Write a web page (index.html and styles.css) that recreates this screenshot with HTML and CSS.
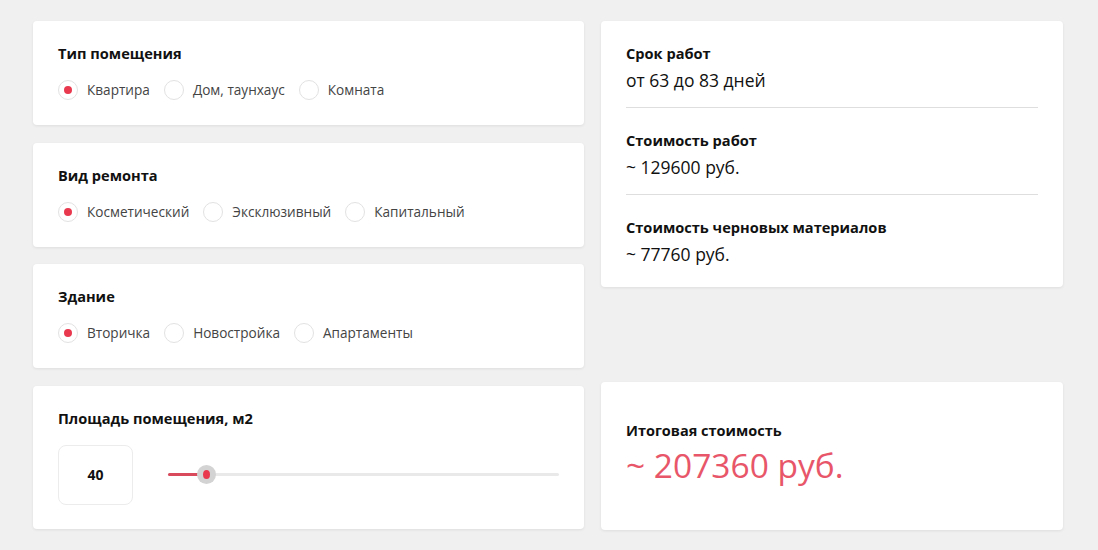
FILE: index.html
```html
<!DOCTYPE html>
<html lang="ru">
<head>
<meta charset="utf-8">
<link rel="stylesheet" href="styles.css">
</head>
<body>
<div class="page">
  <div class="col left">
    <section class="card">
      <h3 class="title">Тип помещения</h3>
      <div class="radios">
        <label class="radio on"><span class="dot"></span>Квартира</label>
        <label class="radio"><span class="dot"></span>Дом, таунхаус</label>
        <label class="radio"><span class="dot"></span>Комната</label>
      </div>
    </section>
    <section class="card">
      <h3 class="title">Вид ремонта</h3>
      <div class="radios">
        <label class="radio on"><span class="dot"></span>Косметический</label>
        <label class="radio"><span class="dot"></span>Эксклюзивный</label>
        <label class="radio"><span class="dot"></span>Капитальный</label>
      </div>
    </section>
    <section class="card">
      <h3 class="title">Здание</h3>
      <div class="radios">
        <label class="radio on"><span class="dot"></span>Вторичка</label>
        <label class="radio"><span class="dot"></span>Новостройка</label>
        <label class="radio"><span class="dot"></span>Апартаменты</label>
      </div>
    </section>
    <section class="card area">
      <h3 class="title">Площадь помещения, м2</h3>
      <div class="area-row">
        <div class="num">40</div>
        <div class="slider">
          <div class="fill" style="width:38px"></div>
          <div class="thumb" style="left:38px"></div>
        </div>
      </div>
    </section>
  </div>
  <div class="col right">
    <section class="card info">
      <div class="item">
        <h3 class="title">Срок работ</h3>
        <div class="value">от 63 до 83 дней</div>
      </div>
      <div class="item">
        <h3 class="title">Стоимость работ</h3>
        <div class="value">~ 129600 руб.</div>
      </div>
      <div class="item">
        <h3 class="title">Стоимость черновых материалов</h3>
        <div class="value">~ 77760 руб.</div>
      </div>
    </section>
    <section class="card total">
      <h3 class="title">Итоговая стоимость</h3>
      <div class="big">~ 207360 руб.</div>
    </section>
  </div>
</div>
</body>
</html>
```

FILE: styles.css
```css
* { box-sizing: border-box; }
html, body { margin: 0; padding: 0; }
body {
  background: #f0f0f0;
  font-family: "Open Sans", "Noto Sans", sans-serif;
  color: #111;
  width: 1098px;
  height: 550px;
  overflow: hidden;
}
.page {
  display: flex;
  gap: 17px;
  padding: 21px 0 0 33px;
}
.col { display: flex; flex-direction: column; }
.left { width: 551px; gap: 17.5px; }
.right { width: 462px; justify-content: space-between; height: 508.5px; }
.card {
  background: #fff;
  border-radius: 4px;
  box-shadow: 0 1px 3px rgba(0,0,0,0.08);
  padding: 22px 25px 0;
}
.left .card { height: 104px; }
.title {
  margin: 0;
  font-size: 14.6px;
  font-weight: 700;
  line-height: 20px;
  color: #111;
}
.radios {
  display: flex;
  gap: 14px;
  margin-top: 17px;
}
.radio {
  display: flex;
  align-items: center;
  gap: 9px;
  font-size: 13.6px;
  color: #444;
  line-height: 20px;
}
.dot {
  width: 20px;
  height: 20px;
  border-radius: 50%;
  border: 1px solid #e2e2e2;
  display: flex;
  align-items: center;
  justify-content: center;
}
.radio.on .dot::after {
  content: "";
  width: 8px;
  height: 8px;
  border-radius: 50%;
  background: #e8394f;
}
.left .card.area { height: 143px; }
.area-row {
  display: flex;
  align-items: center;
  gap: 35px;
  margin-top: 17px;
}
.num {
  width: 75px;
  height: 60px;
  border: 1px solid #ececec;
  border-radius: 8px;
  display: flex;
  align-items: center;
  justify-content: center;
  font-size: 14px;
  font-weight: 700;
}
.slider {
  position: relative;
  flex: 1;
  height: 3px;
  background: #e9e9e9;
  border-radius: 2px;
}
.fill {
  position: absolute;
  left: 0; top: 0;
  height: 3px;
  background: #d94a5c;
  border-radius: 2px;
}
.thumb {
  position: absolute;
  top: 50%;
  width: 19px;
  height: 19px;
  margin: -9.5px 0 0 -9.5px;
  border-radius: 50%;
  background: #d3d3d3;
  display: flex;
  align-items: center;
  justify-content: center;
}
.thumb::after {
  content: "";
  width: 7px;
  height: 9px;
  border-radius: 50%;
  background: #e8394f;
}
.info { height: 266px; padding: 0 25px; }
.item {
  padding: 22px 0 14px;
  border-bottom: 1px solid #dedede;
}
.item:last-child { border-bottom: 0; }
.value {
  font-size: 17.5px;
  line-height: 26px;
  margin-top: 4px;
  color: #111;
}
.total {
  height: 148px;
  padding: 39px 25px 0;
}
.total .title { font-size: 14.5px; }
.big {
  font-size: 33.5px;
  line-height: 40px;
  color: #e8566a;
  margin-top: 4px;
}
```
